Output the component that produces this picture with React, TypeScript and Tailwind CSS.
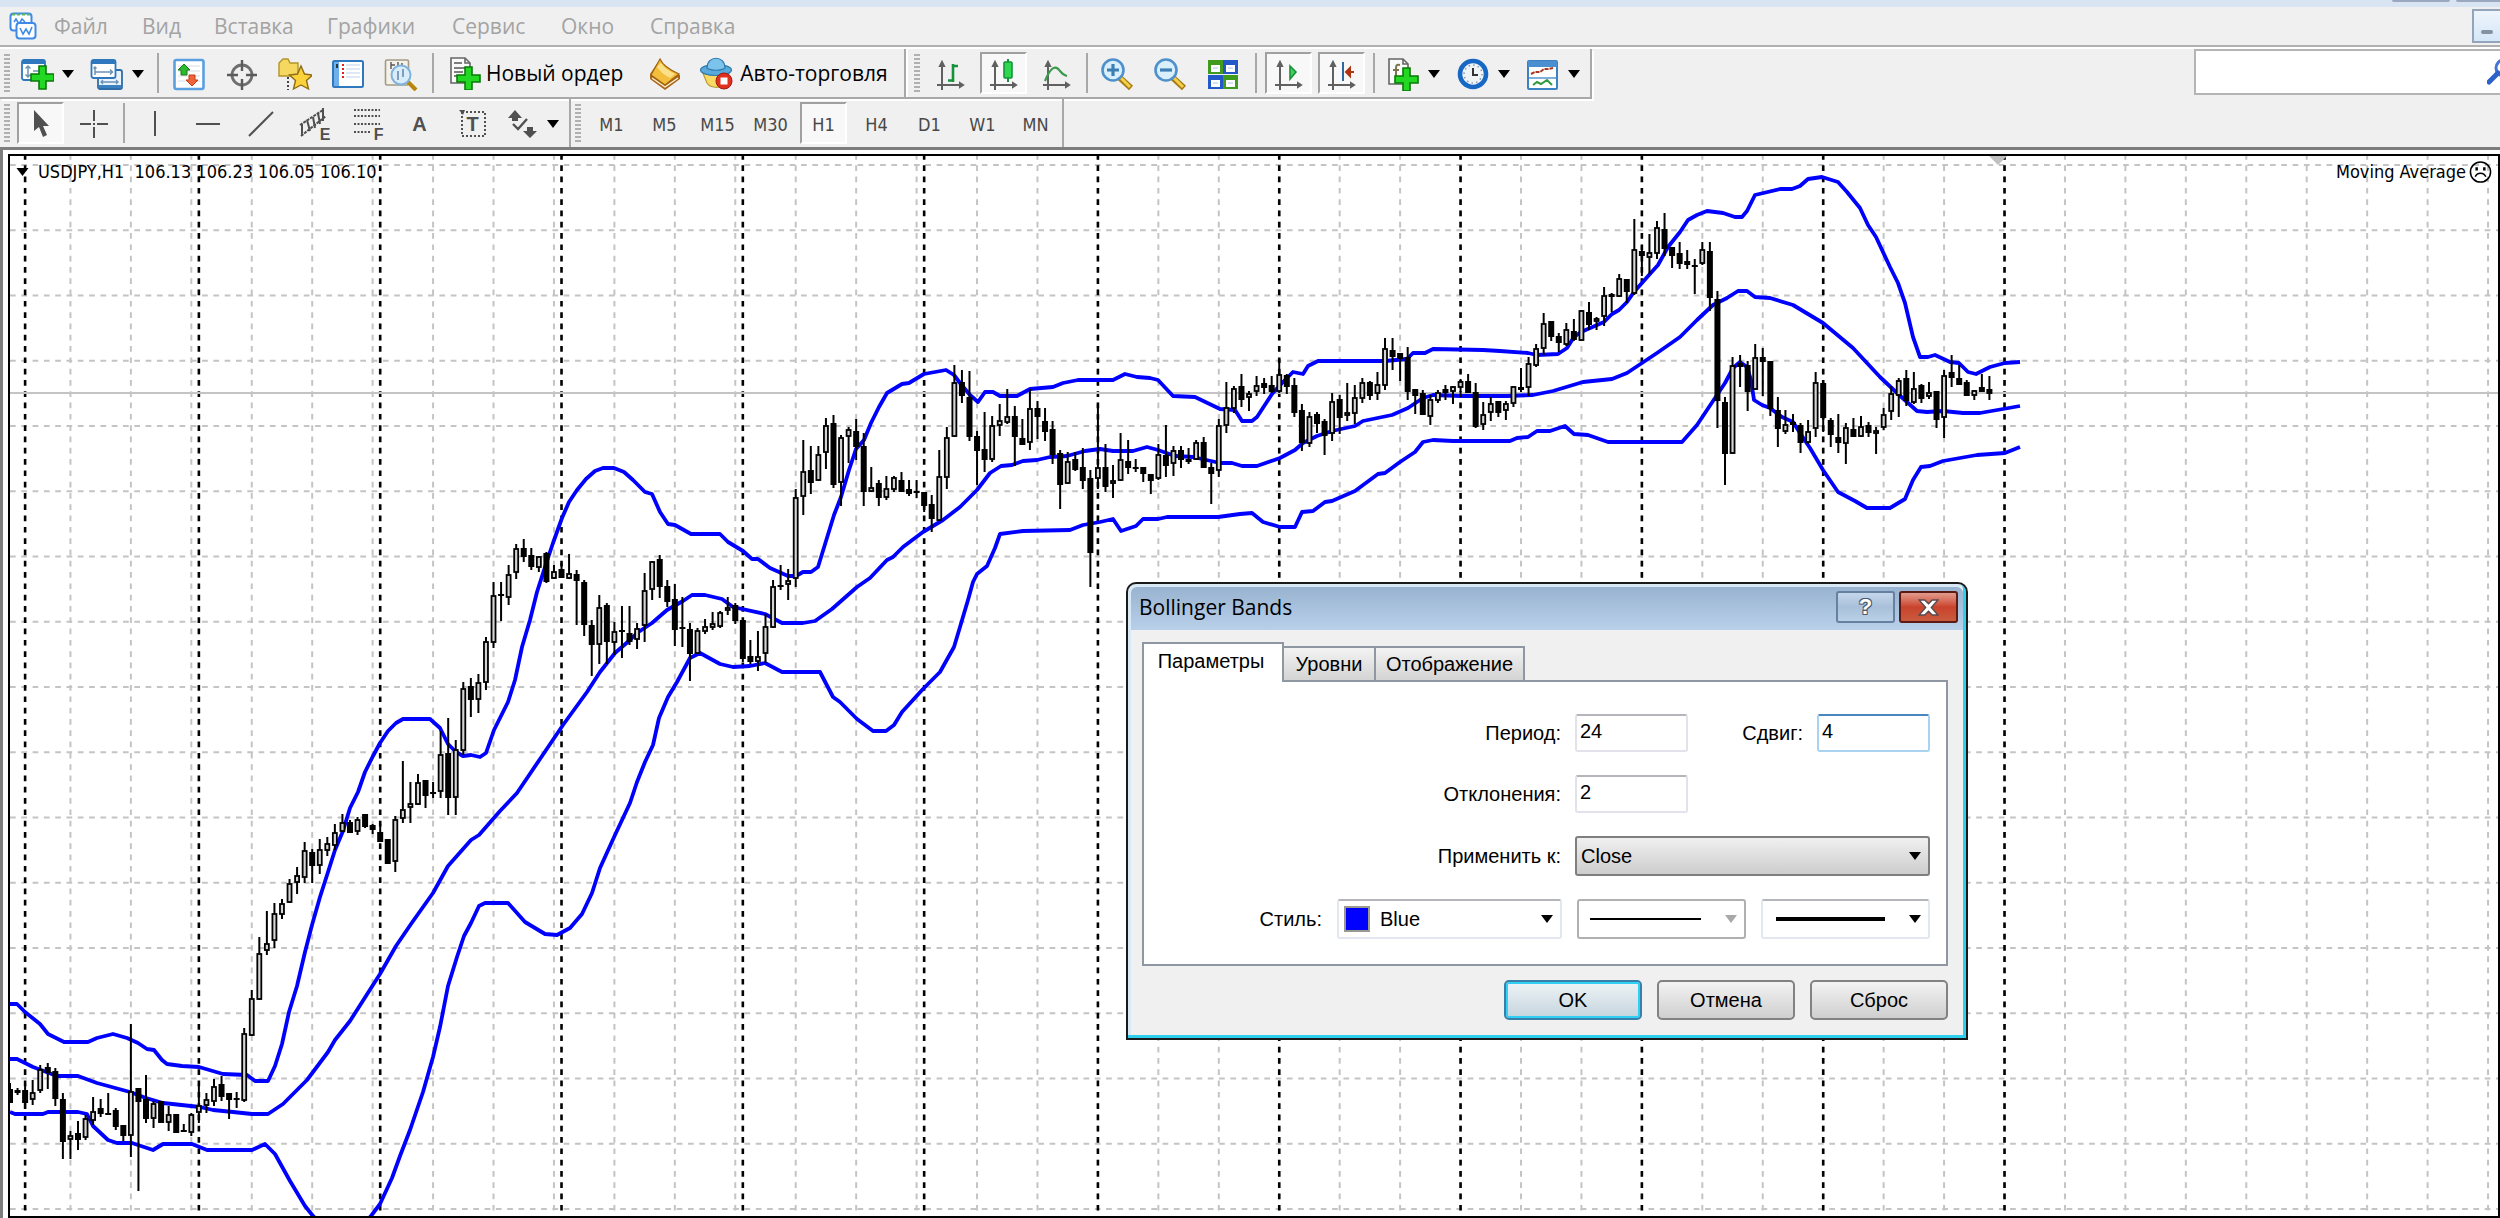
import { useState, type ReactNode } from 'react';
import { clsx } from 'clsx';

// [high, body top, body bottom, low, rising]
type Bar = [number, number, number, number, 0 | 1];

const FIRST_BAR_X = 10;
const BAR_STEP = 7.555;
const LAST_PRICE_Y = 393;

const BARS: Bar[] = [
  [1083, 1089, 1103, 1103, 0], [1088, 1090, 1093, 1095, 0], [1084, 1090, 1103, 1104, 0], [1080, 1092, 1100, 1105, 1],
  [1065, 1069, 1091, 1093, 1], [1063, 1067, 1073, 1089, 0], [1068, 1071, 1099, 1106, 0], [1093, 1099, 1142, 1159, 0],
  [1131, 1135, 1140, 1159, 1], [1121, 1133, 1140, 1150, 0], [1115, 1118, 1138, 1140, 1], [1097, 1111, 1121, 1125, 1],
  [1099, 1108, 1114, 1117, 0], [1093, 1113, 1115, 1115, 0], [1108, 1110, 1127, 1130, 0], [1125, 1125, 1136, 1141, 0],
  [1024, 1091, 1136, 1157, 1], [1088, 1088, 1102, 1191, 0], [1075, 1099, 1119, 1123, 0], [1101, 1103, 1119, 1128, 1],
  [1101, 1101, 1123, 1123, 0], [1106, 1114, 1123, 1131, 1], [1114, 1114, 1133, 1133, 0], [1124, 1130, 1132, 1132, 0],
  [1113, 1114, 1133, 1136, 1], [1084, 1105, 1113, 1123, 1], [1093, 1099, 1106, 1113, 1], [1079, 1086, 1102, 1106, 1],
  [1076, 1084, 1097, 1101, 0], [1093, 1093, 1100, 1119, 0], [1092, 1098, 1099, 1108, 0], [1028, 1033, 1101, 1102, 1],
  [990, 998, 1036, 1036, 1], [937, 953, 1000, 1000, 1], [911, 943, 951, 955, 1], [903, 913, 941, 948, 1],
  [899, 903, 915, 919, 1], [879, 883, 903, 903, 1], [867, 875, 883, 894, 1], [842, 850, 878, 883, 1],
  [849, 852, 866, 883, 0], [839, 849, 866, 874, 1], [837, 843, 851, 856, 1], [824, 832, 846, 850, 1],
  [814, 822, 832, 832, 1], [820, 822, 833, 833, 0], [817, 819, 832, 835, 1], [814, 814, 827, 828, 0],
  [824, 825, 830, 834, 0], [824, 832, 842, 842, 0], [839, 839, 864, 864, 0], [816, 819, 862, 872, 1],
  [761, 809, 819, 823, 1], [782, 803, 808, 823, 1], [774, 782, 805, 805, 1], [780, 780, 796, 808, 0],
  [782, 792, 794, 798, 0], [731, 754, 792, 798, 1], [718, 753, 798, 815, 0], [740, 749, 798, 815, 1],
  [682, 688, 751, 755, 1], [678, 686, 700, 717, 0], [674, 682, 700, 713, 1], [637, 641, 683, 690, 1],
  [582, 595, 643, 648, 1], [582, 594, 596, 621, 0], [565, 574, 598, 605, 1], [544, 548, 573, 579, 1],
  [539, 548, 557, 562, 0], [548, 555, 567, 570, 0], [556, 556, 568, 572, 1], [552, 553, 582, 583, 0],
  [565, 571, 579, 579, 1], [563, 569, 578, 578, 0], [554, 573, 579, 579, 1], [570, 574, 581, 625, 0],
  [580, 582, 625, 636, 0], [620, 625, 645, 676, 0], [595, 607, 645, 664, 1], [603, 605, 642, 664, 0],
  [622, 631, 643, 655, 1], [606, 630, 632, 658, 0], [606, 633, 642, 645, 0], [623, 628, 640, 649, 1],
  [573, 590, 626, 642, 1], [561, 561, 590, 600, 1], [555, 559, 587, 598, 0], [580, 586, 602, 607, 0],
  [584, 599, 630, 646, 0], [597, 627, 628, 647, 0], [623, 629, 654, 681, 0], [628, 630, 654, 654, 1],
  [619, 626, 632, 634, 1], [612, 623, 628, 630, 1], [611, 612, 627, 628, 1], [597, 607, 611, 615, 1],
  [603, 605, 621, 624, 0], [620, 620, 659, 662, 0], [640, 656, 662, 664, 0], [631, 656, 662, 671, 1],
  [614, 626, 654, 663, 1], [580, 586, 628, 628, 1], [565, 585, 587, 590, 0], [569, 580, 585, 600, 1],
  [489, 497, 579, 587, 1], [440, 471, 497, 515, 1], [446, 470, 483, 494, 0], [446, 454, 481, 481, 1],
  [418, 425, 453, 469, 1], [415, 423, 485, 488, 0], [435, 437, 483, 506, 1], [427, 429, 437, 463, 1],
  [419, 431, 447, 460, 0], [433, 446, 492, 506, 0], [467, 487, 492, 492, 1], [480, 483, 498, 506, 0],
  [476, 488, 498, 500, 1], [476, 477, 490, 492, 1], [472, 480, 492, 492, 0], [480, 489, 494, 496, 0],
  [480, 491, 492, 498, 0], [492, 492, 506, 512, 0], [495, 504, 519, 532, 0], [450, 476, 521, 521, 1],
  [427, 437, 478, 489, 1], [365, 382, 437, 437, 1], [370, 382, 396, 403, 0], [371, 397, 437, 441, 0],
  [431, 436, 451, 485, 0], [412, 449, 460, 472, 0], [416, 425, 460, 462, 1], [404, 420, 426, 436, 1],
  [389, 416, 423, 424, 1], [406, 416, 437, 466, 0], [419, 438, 445, 445, 0], [389, 408, 443, 450, 1],
  [401, 408, 417, 439, 0], [408, 421, 432, 441, 0], [421, 429, 455, 464, 0], [450, 453, 485, 509, 0],
  [452, 461, 484, 484, 1], [452, 459, 470, 471, 0], [448, 467, 481, 489, 0], [470, 478, 553, 587, 0],
  [404, 467, 479, 489, 1], [444, 467, 487, 492, 0], [465, 480, 484, 498, 1], [433, 459, 481, 481, 1],
  [440, 461, 468, 474, 0], [459, 467, 469, 472, 0], [467, 467, 474, 482, 0], [474, 474, 481, 494, 0],
  [444, 454, 479, 480, 1], [425, 455, 466, 477, 0], [446, 450, 464, 476, 1], [446, 450, 460, 468, 0],
  [448, 459, 462, 464, 0], [440, 442, 460, 460, 1], [437, 442, 468, 468, 0], [463, 467, 474, 504, 0],
  [419, 425, 471, 477, 1], [382, 407, 426, 433, 1], [386, 388, 409, 413, 1], [374, 386, 400, 407, 0],
  [391, 393, 398, 411, 1], [376, 385, 392, 396, 1], [378, 383, 388, 394, 0], [376, 385, 392, 393, 0],
  [359, 374, 392, 393, 1], [374, 375, 387, 394, 0], [378, 385, 413, 417, 0], [404, 410, 443, 451, 0],
  [412, 416, 444, 447, 1], [412, 414, 424, 433, 0], [419, 421, 436, 455, 0], [393, 401, 434, 441, 1],
  [395, 399, 418, 434, 0], [383, 412, 416, 421, 1], [385, 397, 414, 424, 1], [378, 382, 399, 403, 1],
  [381, 382, 396, 400, 0], [372, 384, 394, 400, 1], [338, 348, 386, 390, 1], [338, 350, 357, 370, 0],
  [353, 353, 359, 381, 0], [347, 357, 392, 400, 0], [389, 389, 396, 414, 0], [390, 393, 415, 415, 0],
  [395, 399, 417, 425, 1], [390, 392, 401, 403, 1], [385, 389, 393, 400, 0], [386, 386, 392, 404, 1],
  [379, 381, 388, 397, 1], [374, 381, 393, 393, 0], [383, 392, 427, 428, 0], [402, 414, 425, 430, 1],
  [397, 403, 413, 421, 1], [401, 401, 413, 417, 0], [401, 403, 411, 420, 1], [386, 386, 404, 407, 1],
  [368, 387, 390, 392, 0], [357, 363, 388, 396, 1], [344, 348, 366, 367, 1], [313, 323, 349, 355, 1],
  [321, 321, 337, 341, 0], [333, 336, 343, 352, 0], [323, 329, 345, 346, 1], [319, 331, 340, 341, 0],
  [310, 310, 341, 341, 1], [302, 312, 325, 330, 0], [317, 318, 322, 330, 1], [287, 295, 317, 326, 1],
  [293, 294, 297, 312, 0], [274, 278, 297, 297, 1], [279, 279, 292, 303, 0], [219, 249, 294, 295, 1],
  [246, 251, 256, 276, 0], [234, 252, 258, 274, 1], [221, 227, 254, 259, 1], [213, 229, 249, 256, 0],
  [247, 247, 256, 268, 0], [242, 253, 264, 269, 0], [250, 261, 265, 269, 0], [259, 265, 266, 294, 0],
  [242, 249, 264, 265, 1], [242, 251, 298, 311, 0], [291, 299, 401, 428, 0], [397, 402, 454, 485, 0],
  [357, 365, 454, 454, 1], [355, 363, 367, 387, 0], [361, 365, 392, 411, 0], [344, 357, 390, 390, 1],
  [348, 357, 362, 396, 0], [361, 361, 409, 416, 0], [397, 410, 429, 447, 0], [410, 424, 432, 434, 1],
  [414, 422, 425, 432, 0], [423, 425, 443, 453, 0], [420, 431, 443, 444, 1], [372, 382, 429, 437, 1],
  [382, 383, 418, 432, 0], [418, 420, 435, 447, 0], [414, 437, 443, 453, 0], [423, 427, 444, 464, 1],
  [418, 429, 437, 437, 0], [416, 426, 437, 437, 1], [422, 425, 433, 437, 0], [427, 430, 434, 454, 1],
  [408, 414, 428, 430, 1], [386, 393, 412, 420, 1], [378, 380, 396, 417, 1], [370, 378, 401, 406, 0],
  [372, 388, 403, 404, 1], [384, 385, 399, 403, 0], [382, 392, 397, 399, 1], [391, 391, 420, 428, 0],
  [370, 375, 418, 438, 1], [355, 372, 378, 387, 0], [365, 378, 385, 385, 0], [380, 382, 396, 396, 0],
  [390, 390, 396, 400, 1], [374, 387, 392, 392, 0], [376, 389, 394, 400, 0],
];

const UPPER_BAND =
  '10,1004 17,1004 25,1012 40,1024 48,1034 64,1042 88,1042 97,1038 113,1034 127,1038 138,1043 147,1049 154,1050 162,1060 167,1064 182,1066 199,1067 223,1074 247,1075 255,1081 268,1081 275,1066 282,1044 289,1012 297,986 305,952 312,925 320,897 328,872 335,850 343,831 350,808 358,792 365,772 373,756 380,743 388,731 396,723 403,719 430,719 440,728 448,744 456,752 463,756 471,755 480,757 486,753 494,730 508,702 515,680 522,647 530,620 537,592 545,567 553,543 562,518 569,502 577,490 586,479 595,471 603,468 614,468 624,472 633,480 645,492 652,494 660,512 668,524 675,525 691,534 720,534 728,542 743,551 752,559 758,559 770,568 788,576 796,576 803,572 811,572 818,567 826,541 834,515 841,497 849,470 856,449 864,440 871,423 879,407 887,393 902,384 909,383 924,374 946,370 954,375 960,383 970,395 978,402 985,392 993,392 1000,396 1017,396 1030,389 1053,387 1063,383 1078,380 1113,380 1125,374 1137,377 1150,378 1158,380 1173,396 1195,397 1220,409 1235,410 1242,421 1252,421 1257,417 1272,394 1282,383 1293,372 1303,374 1308,366 1318,361 1385,361 1407,359 1413,353 1425,353 1433,349 1483,350 1500,351 1528,353 1537,355 1558,354 1567,348 1574,337 1581,332 1604,322 1612,314 1619,310 1627,302 1634,292 1649,275 1658,265 1668,247 1680,232 1688,220 1697,215 1707,211 1723,213 1735,217 1742,217 1747,211 1755,195 1780,189 1792,189 1800,186 1808,179 1822,177 1838,182 1847,192 1860,208 1868,225 1876,237 1890,267 1898,283 1905,303 1913,337 1920,357 1928,357 1935,355 1950,362 1959,363 1968,372 1976,374 1990,367 2005,363 2020,362';

const MIDDLE_BAND =
  '10,1059 17,1059 33,1067 57,1076 78,1076 97,1083 130,1092 146,1098 163,1103 200,1107 213,1110 233,1112 252,1114 268,1114 283,1104 307,1080 328,1052 335,1040 350,1021 380,974 396,946 411,924 433,893 448,866 471,840 479,835 500,811 517,793 540,759 563,725 587,692 600,672 615,653 630,640 637,633 652,623 667,610 683,601 692,595 705,595 722,599 733,607 765,614 782,623 803,623 815,621 832,609 857,587 870,578 887,560 893,557 903,547 923,532 943,520 960,507 977,490 990,473 1001,466 1012,465 1023,461 1037,460 1050,457 1067,456 1085,451 1100,449 1113,451 1133,451 1147,447 1158,450 1175,456 1193,457 1220,463 1232,463 1242,466 1257,466 1280,458 1295,450 1303,443 1317,436 1332,431 1355,426 1363,421 1392,415 1408,408 1423,398 1433,395 1461,396 1507,396 1533,395 1553,391 1583,382 1612,379 1627,373 1642,363 1657,353 1680,337 1697,320 1713,305 1727,298 1738,291 1747,291 1755,297 1770,298 1793,305 1823,323 1853,348 1880,377 1897,393 1917,411 1927,412 1943,411 1963,413 1980,413 2003,409 2020,406';

const LOWER_BAND =
  '10,1112 15,1114 43,1114 48,1112 78,1112 87,1114 93,1126 108,1140 117,1143 132,1143 153,1150 163,1144 192,1144 207,1150 252,1150 265,1144 275,1154 290,1181 305,1206 313,1216 330,1232 355,1232 371,1216 380,1204 392,1178 400,1156 410,1130 423,1092 433,1057 440,1027 448,986 457,957 464,936 471,923 479,906 485,903 508,903 525,922 545,934 557,935 570,928 582,914 592,893 600,868 615,835 630,803 637,782 645,762 653,745 659,718 668,697 677,682 690,658 700,653 720,664 733,667 750,666 765,663 782,672 820,672 833,697 840,702 857,719 873,731 886,731 894,725 902,712 923,689 940,672 954,647 960,627 968,600 973,582 977,574 987,566 995,548 1000,534 1023,531 1070,530 1083,525 1100,522 1113,519 1121,531 1136,526 1143,519 1158,519 1167,517 1218,517 1240,514 1252,513 1263,522 1280,527 1295,527 1302,512 1313,511 1325,502 1332,501 1355,491 1378,474 1385,473 1400,462 1415,452 1423,442 1433,440 1453,441 1510,441 1517,438 1528,437 1537,431 1550,431 1565,426 1574,434 1588,435 1608,442 1650,442 1682,442 1697,425 1715,398 1725,383 1733,368 1740,362 1747,367 1751,380 1754,400 1762,405 1770,408 1782,417 1793,422 1800,433 1810,448 1823,470 1838,492 1855,501 1867,508 1890,508 1905,499 1913,480 1921,467 1930,466 1943,461 1977,455 2005,453 2020,447';

// bar indexes where a trading day starts
const DAY_STARTS = [2, 25, 49, 73, 97, 121, 144, 168, 192, 216, 240, 264];

const MENU = [
  { label: 'Файл', width: 'w-[88px]' },
  { label: 'Вид', width: 'w-[72px]' },
  { label: 'Вставка', width: 'w-[113px]' },
  { label: 'Графики', width: 'w-[125px]' },
  { label: 'Сервис', width: 'w-[109px]' },
  { label: 'Окно', width: 'w-[89px]' },
  { label: 'Справка', width: 'w-[89px]' },
];

const TIMEFRAMES = ['M1', 'M5', 'M15', 'M30', 'H1', 'H4', 'D1', 'W1', 'MN'];

function barX(index: number) {
  return FIRST_BAR_X + index * BAR_STEP;
}

/* ---------- icons ---------- */

function Icon({ children }: { children: ReactNode }) {
  return (
    <svg viewBox="0 0 34 34" className="h-[34px] w-[34px] shrink-0" fill="none" aria-hidden="true">
      {children}
    </svg>
  );
}

function Caret({ className = 'text-black' }: { className?: string }) {
  return (
    <svg viewBox="0 0 12 8" className={clsx('h-[8px] w-[12px] shrink-0', className)} aria-hidden="true">
      <path d="M0 0h12L6 8z" fill="currentColor" />
    </svg>
  );
}

function Plus() {
  return <path d="M18 10h7v8h8v7h-8v8h-7v-8h-8v-7h8z" fill="#22d822" stroke="#0a7a0a" strokeWidth="1.6" />;
}

function AppIcon() {
  return (
    <svg viewBox="0 0 28 28" className="h-[28px] w-[28px] shrink-0" fill="none" aria-hidden="true">
      <rect x="1.5" y="1.5" width="21" height="17" rx="3" fill="#fff" stroke="#3f8ae6" strokeWidth="2" />
      <path d="M3 2.5h18" stroke="#5cb85c" strokeWidth="2" strokeDasharray="3 2" />
      <path d="M5 10l2-3 3 5 3-5 3 3" stroke="#3f8ae6" strokeWidth="1.6" />
      <rect x="7.5" y="11" width="19" height="15.5" rx="3" fill="#fff" stroke="#3f8ae6" strokeWidth="2" />
      <path d="M11 16l3 6 3-5 3 5 3-7" stroke="#3f8ae6" strokeWidth="1.6" />
    </svg>
  );
}

function NewChartIcon() {
  return (
    <Icon>
      <rect x="2" y="3" width="23" height="20" rx="2" fill="#fff" stroke="#2f78bd" strokeWidth="1.8" />
      <path d="M2 3h23v4H2z" fill="#2f78bd" />
      <path d="M8 9v11M5.5 11.5L8 9l2.5 2.5M5.5 17.5L8 20l2.5-2.5M13 14h6" stroke="#6d93b5" strokeWidth="1.5" />
      <g transform="translate(1 -1)">
        <Plus />
      </g>
    </Icon>
  );
}

function ProfilesIcon() {
  return (
    <Icon>
      <rect x="8" y="13" width="24" height="19" rx="2" fill="#e9f3fc" stroke="#2f6ca8" strokeWidth="1.8" />
      <path d="M9 28h22v3H9z" fill="#3b7fc0" />
      <path d="M11 25h17M13 23l-2 2 2 2M26 23l2 2-2 2" stroke="#6d93b5" strokeWidth="1.4" />
      <rect x="1.5" y="3" width="24" height="18" rx="2" fill="#fff" stroke="#2f78bd" strokeWidth="1.8" />
      <path d="M1.5 3h24v4h-24z" fill="#2f78bd" />
      <path d="M5 10v8M5 15h17M20 12.5l2.5 2.5-2.5 2.5M3.5 11.5L5 10l1.5 1.5" stroke="#6d93b5" strokeWidth="1.5" />
    </Icon>
  );
}

function MarketWatchIcon() {
  return (
    <Icon>
      <rect x="2.500" y="3" width="29" height="29" rx="2" fill="#fff" stroke="#5a9fe0" strokeWidth="2.6" />
      <path d="M6 9h22M6 14h22M6 19h22M6 24h22" stroke="#d5dde5" strokeWidth="1" />
      <path d="M12 7l6 6h-3v5H9v-5H6z" fill="#2eb82e" stroke="#167a16" />
      <path d="M20 29l-6-6h3v-5h6v5h3z" fill="#f0643c" stroke="#c43c14" />
    </Icon>
  );
}

function NavigatorIcon() {
  return (
    <Icon>
      <circle cx="17" cy="18" r="10" stroke="#6e6e6e" strokeWidth="2.8" />
      <path d="M17 3v11M17 22v11M2 18h11M21 18h11" stroke="#5a5a5a" strokeWidth="2.4" />
    </Icon>
  );
}

function FavoritesIcon() {
  return (
    <Icon>
      <path d="M10 20v13" stroke="#444" strokeWidth="2" strokeDasharray="2 2" />
      <path d="M1 6l4-4h5l2 4h8v13H1z" fill="#f6d860" stroke="#b3942a" strokeWidth="1.4" />
      <path d="M23 9l3.5 8 8 1-6 5.500 2 8.500-7.500-4-7.500 4 2-8.500-6-5.500 8-1z" fill="#fbd23c" stroke="#8f6d10" strokeWidth="1.4" />
    </Icon>
  );
}

function DataWindowIcon() {
  return (
    <Icon>
      <rect x="2" y="4" width="30" height="26" rx="1.5" fill="#fff" stroke="#2f78bd" strokeWidth="2" />
      <path d="M3 5h5v24H3z" fill="#6fb0ea" />
      <path d="M6 7v4" stroke="#111" strokeWidth="1.5" />
      <path d="M12 7v2M12 11v2M12 15v2M12 19v2" stroke="#e02020" strokeWidth="2" />
      <path d="M15 8h14M15 12h14M15 16h14M15 20h14" stroke="#bcd2ea" strokeWidth="1" />
    </Icon>
  );
}

function TesterIcon() {
  return (
    <Icon>
      <rect x="1.5" y="3" width="23" height="25" rx="1.5" fill="#f4f1ea" stroke="#a49a84" strokeWidth="1.6" />
      <path d="M7 5v7M7 8h4M14 5v7M14 9h4M18 6v5" stroke="#555" strokeWidth="1.4" />
      <path d="M24 25l8 8" stroke="#b8860b" strokeWidth="4" />
      <circle cx="17" cy="18" r="9.5" fill="#d8ecfa" stroke="#7fb2dc" strokeWidth="2" />
      <path d="M14 14v9M19 12v8" stroke="#7f9fba" strokeWidth="2" />
    </Icon>
  );
}

function PageWithPlusIcon({ indicator }: { indicator?: boolean }) {
  return (
    <Icon>
      <path d="M3 2h14l5 5v20H3z" fill="#fafafa" stroke="#666" strokeWidth="1.6" />
      <path d="M17 2v5h5" stroke="#666" strokeWidth="1.6" />
      {indicator ? (
        <path d="M14 8c-4-1-4 1-4 4v9M7 13h6" stroke="#7b7350" strokeWidth="2" />
      ) : (
        <path d="M6 7h8M6 12h12M6 16h9M6 20h6" stroke="#555" strokeWidth="1.6" />
      )}
      <g transform="translate(-1 1)">
        <Plus />
      </g>
    </Icon>
  );
}

function MetaEditorIcon() {
  return (
    <Icon>
      <path d="M12 2c3 7 10 11 20 16v4L17 33 2 22v-5z" fill="#a8661a" />
      <path d="M12 2c3 7 10 11 19 15L17 28 3 18z" fill="#f2be3c" stroke="#a0620f" strokeWidth="1.2" />
      <path d="M13 6c3 5 8 8 14 11l-5 4C16 18 12 14 9 10z" fill="#fbe08a" />
      <path d="M4 21l13 9 13-9" stroke="#fdf2cf" strokeWidth="1.4" />
    </Icon>
  );
}

function AutoTradeIcon() {
  return (
    <Icon>
      <path d="M3 15l5 12c3 5 13 6 17 1l6-13z" fill="#f7d964" stroke="#b99a2c" strokeWidth="1.2" />
      <ellipse cx="17" cy="14" rx="15.500" ry="5.500" fill="#58a9dc" stroke="#2f79ad" strokeWidth="1.2" />
      <path d="M8 12C8-1 26-1 26 12c-4 3-14 3-18 0z" fill="#7cc3ec" stroke="#2f79ad" strokeWidth="1.2" />
      <circle cx="25" cy="25" r="8" fill="#e0301e" stroke="#a01a10" />
      <rect x="21.500" y="21.500" width="7" height="7" fill="#fff" />
    </Icon>
  );
}

function Axes() {
  return <path d="M9 5v28M4 28h26M7 9l2-4 2 4zM27 26l3 2-3 2z" stroke="#606060" strokeWidth="2" fill="#606060" />;
}

function BarChartIcon() {
  return (
    <Icon>
      <Axes />
      <path d="M20 7v18M20 9h5M15 23.5h5" stroke="#16933a" strokeWidth="2.6" />
    </Icon>
  );
}

function CandleChartIcon() {
  return (
    <Icon>
      <Axes />
      <path d="M22 2v23" stroke="#16933a" strokeWidth="2" />
      <rect x="18" y="5" width="8" height="16" rx="1" fill="#2fd64f" stroke="#16933a" strokeWidth="1.6" />
    </Icon>
  );
}

function LineChartIcon() {
  return (
    <Icon>
      <Axes />
      <path d="M6 24c6-15 11-16 15-10 3 4 4 4 7 5" stroke="#3a9a4a" strokeWidth="2.2" />
    </Icon>
  );
}

function ZoomIcon({ out }: { out?: boolean }) {
  return (
    <Icon>
      <path d="M19 20l12 11" stroke="#a67c12" strokeWidth="6" />
      <path d="M20 20l10 10" stroke="#f3cf4a" strokeWidth="3" />
      <circle cx="13" cy="13" r="10.5" fill="#d9effc" stroke="#4f90cc" strokeWidth="2.6" />
      <path d={out ? 'M7 13h12' : 'M7 13h12M13 7v12'} stroke="#3c7fb5" strokeWidth="3.2" />
    </Icon>
  );
}

function TilesIcon() {
  return (
    <Icon>
      <path d="M2 3h15v14H2zM17 18h15v14H17z" fill="#3f9b1c" />
      <path d="M17 3h15v14H17zM2 18h15v14H2z" fill="#2457c8" />
      <path d="M5 8h9v7H5zM20 8h9v7h-9zM5 23h9v7H5zM20 23h9v7h-9z" fill="#fff" />
      <path d="M7 11h5M22 11h5M7 26h5M22 26h5" stroke="#a9c4e6" />
    </Icon>
  );
}

function AutoScrollIcon() {
  return (
    <Icon>
      <Axes />
      <path d="M19 9l6 6-6 7z" fill="#3fd25c" stroke="#16933a" strokeWidth="1.6" />
    </Icon>
  );
}

function ChartShiftIcon() {
  return (
    <Icon>
      <Axes />
      <path d="M19 5v19" stroke="#2b6aa0" strokeWidth="2" />
      <path d="M22 15h8M26 11l-4 4 4 4z" fill="#d8431c" stroke="#b0330f" strokeWidth="2" />
    </Icon>
  );
}

function ClockIcon() {
  return (
    <Icon>
      <circle cx="17" cy="17" r="13" fill="#eef3f8" stroke="#1668c4" strokeWidth="4.6" />
      <circle cx="17" cy="17" r="9" stroke="#8a98a6" strokeWidth="1.5" strokeDasharray="1.5 3.2" />
      <path d="M17 11v7h5" stroke="#333" strokeWidth="2" />
    </Icon>
  );
}

function TemplateIcon() {
  return (
    <Icon>
      <rect x="2" y="4" width="29" height="28" rx="1" fill="#fff" stroke="#3b82c4" strokeWidth="2" />
      <path d="M2 4h29v6H2z" fill="#4a8fd0" />
      <path d="M3 21h27" stroke="#7fb0dc" strokeWidth="2" />
      <path d="M5 17l4-2h5l4-3h4l5-1" stroke="#a63a22" strokeWidth="2" strokeDasharray="4 1" />
      <path d="M7 28l4-3 4 2 6-4 5 5" stroke="#2f9a3f" strokeWidth="2" />
    </Icon>
  );
}

function CursorIcon() {
  return (
    <Icon>
      <path d="M10 3v21l5-4 4 10 4-2-4-9h6z" fill="#505050" />
    </Icon>
  );
}

function CrosshairIcon() {
  return (
    <Icon>
      <path d="M17 3v11M17 20v11M3 17h11M20 17h11M16 17h2" stroke="#505050" strokeWidth="2" />
    </Icon>
  );
}

function StrokeIcon({ d }: { d: string }) {
  return (
    <Icon>
      <path d={d} stroke="#505050" strokeWidth="2" />
    </Icon>
  );
}

function ChannelIcon() {
  return (
    <span className="relative block">
      <Icon>
        <path d="M3 18L26 3M4 29L29 9" stroke="#505050" strokeWidth="2" strokeDasharray="3 1" />
        <path d="M5 17v12M10 13l3 11M16 10l2 11M21 6l2 11M26 1v13" stroke="#505050" strokeWidth="2" />
      </Icon>
      <span className="absolute right-0 bottom-0 bg-[#f0f0f0] pl-px text-base leading-3 font-bold">E</span>
    </span>
  );
}

function FibonacciIcon() {
  return (
    <span className="relative block">
      <Icon>
        <path d="M4 3h26M4 9h26M4 17h26M4 25h17" stroke="#505050" strokeWidth="2" strokeDasharray="2 1.5" />
      </Icon>
      <span className="absolute right-0 bottom-0 bg-[#f0f0f0] pl-px text-base leading-3 font-bold">F</span>
    </span>
  );
}

function LabelIcon() {
  return (
    <span className="relative flex items-center justify-center">
      <Icon>
        <rect x="6" y="5" width="23" height="24" stroke="#505050" strokeWidth="2" strokeDasharray="2 2" />
        <path d="M3 3h6l-2 5z" fill="#505050" />
      </Icon>
      <span className="absolute text-xl leading-5 font-bold">T</span>
    </span>
  );
}

function ArrowsIcon() {
  return (
    <Icon>
      <path d="M10 3l7 8h-4v3H7v-3H3zM25 31l-7-7h4v-4h6v4h4z" fill="#505050" />
      <path d="M8 17l5 5 9-10" stroke="#505050" strokeWidth="2.4" />
    </Icon>
  );
}

/* ---------- toolbars ---------- */

function Grip() {
  return (
    <span
      className="mx-1 h-[38px] w-[6px] shrink-0 self-center bg-[repeating-linear-gradient(to_bottom,#b0b0b0_0_2px,#f0f0f0_2px_4px)]"
      aria-hidden="true"
    />
  );
}

function Divider({ className = 'mx-[3px]' }: { className?: string }) {
  return <span className={clsx('h-[40px] w-[2px] shrink-0 self-center bg-[#a8a8a8]', className)} aria-hidden="true" />;
}

type ToolProps = {
  label: string;
  pressed?: boolean;
  children: ReactNode;
};

function Tool({ label, pressed, children }: ToolProps) {
  return (
    <button
      type="button"
      aria-label={label}
      aria-pressed={pressed}
      className={clsx(
        'mx-[3px] flex h-[42px] w-[47px] shrink-0 items-center justify-center border-2 pt-[2px] font-["Liberation_Sans",sans-serif] text-[#505050]',
        pressed ? 'border-t-[#a0a0a0] border-r-white border-b-white border-l-[#a0a0a0] bg-[#f8f8f8]' : 'border-transparent',
      )}
    >
      {children}
    </button>
  );
}

function MenuTool({ label, children }: ToolProps) {
  return (
    <button type="button" aria-label={label} className="flex h-[42px] w-[70px] shrink-0 items-center gap-2 pt-[2px] pl-[6px]">
      {children}
      <Caret />
    </button>
  );
}

function MenuBar() {
  return (
    <nav className="flex h-[38px] shrink-0 items-center text-[21px] leading-7 text-[#a3a3a3]">
      <span className="mr-[17px] ml-[9px]">
        <AppIcon />
      </span>
      {MENU.map((item) => (
        <button key={item.label} type="button" className={clsx('shrink-0 text-left', item.width)}>
          {item.label}
        </button>
      ))}
      <button
        type="button"
        aria-label="Свернуть"
        className="ml-auto flex h-[34px] w-[28px] items-end border-2 border-r-0 border-[#93a5bb] bg-gradient-to-b from-[#eef5fc] to-[#d5e6f7] pb-[7px] pl-[7px]"
      >
        <span className="h-[4px] w-[12px] rounded-sm bg-[#8491a1]" />
      </button>
    </nav>
  );
}

function StandardToolbar() {
  return (
    <div className="flex h-[50px] items-center border-r-2 border-b-2 border-[#a8a8a8] shadow-[2px_2px_0_#fff]">
      <Grip />
      <MenuTool label="Новый график">
        <NewChartIcon />
      </MenuTool>
      <MenuTool label="Профили">
        <ProfilesIcon />
      </MenuTool>
      <Divider />
      <Tool label="Обзор рынка">
        <MarketWatchIcon />
      </Tool>
      <Tool label="Навигатор">
        <NavigatorIcon />
      </Tool>
      <Tool label="Избранное">
        <FavoritesIcon />
      </Tool>
      <Tool label="Окно данных">
        <DataWindowIcon />
      </Tool>
      <Tool label="Тестер стратегий">
        <TesterIcon />
      </Tool>
      <Divider className="mx-[5px]" />
      <button type="button" className="mr-[15px] flex h-[42px] shrink-0 items-center gap-1 pl-[9px] text-[21px] leading-7 whitespace-nowrap">
        <PageWithPlusIcon />
        Новый ордер
      </button>
      <Tool label="MetaEditor">
        <MetaEditorIcon />
      </Tool>
      <button type="button" className="mr-4 flex h-[42px] shrink-0 items-center gap-[7px] pl-2 text-[21px] leading-7 whitespace-nowrap">
        <AutoTradeIcon />
        Авто-торговля
      </button>
      <span className="mr-[2px] h-full w-[4px] border-r-2 border-l-2 border-l-[#a8a8a8] border-r-white" />
      <Grip />
      <Tool label="Бары">
        <BarChartIcon />
      </Tool>
      <Tool label="Японские свечи" pressed>
        <CandleChartIcon />
      </Tool>
      <Tool label="Линия">
        <LineChartIcon />
      </Tool>
      <Divider />
      <Tool label="Увеличить">
        <ZoomIcon />
      </Tool>
      <Tool label="Уменьшить">
        <ZoomIcon out />
      </Tool>
      <Tool label="Выстроить окна">
        <TilesIcon />
      </Tool>
      <Divider className="mx-[5px]" />
      <Tool label="Автопрокрутка" pressed>
        <AutoScrollIcon />
      </Tool>
      <Tool label="Сдвиг графика" pressed>
        <ChartShiftIcon />
      </Tool>
      <Divider className="mx-[5px]" />
      <MenuTool label="Индикаторы">
        <PageWithPlusIcon indicator />
      </MenuTool>
      <MenuTool label="Периоды">
        <ClockIcon />
      </MenuTool>
      <MenuTool label="Шаблоны">
        <TemplateIcon />
      </MenuTool>
    </div>
  );
}

function DrawingToolbar() {
  return (
    <div className="flex h-[48px] items-center border-r-2 border-[#a8a8a8]">
      <Grip />
      <Tool label="Курсор" pressed>
        <CursorIcon />
      </Tool>
      <Tool label="Перекрестие">
        <CrosshairIcon />
      </Tool>
      <Divider />
      <Tool label="Вертикальная линия">
        <StrokeIcon d="M17 4v25" />
      </Tool>
      <Tool label="Горизонтальная линия">
        <StrokeIcon d="M5 17h24" />
      </Tool>
      <Tool label="Трендовая линия">
        <StrokeIcon d="M5 29L29 5" />
      </Tool>
      <Tool label="Равноудаленный канал">
        <ChannelIcon />
      </Tool>
      <Tool label="Линии Фибоначчи">
        <FibonacciIcon />
      </Tool>
      <Tool label="Текст">
        <span className="text-xl font-bold">A</span>
      </Tool>
      <Tool label="Текстовая метка">
        <LabelIcon />
      </Tool>
      <MenuTool label="Стрелки">
        <ArrowsIcon />
      </MenuTool>
    </div>
  );
}

function PeriodToolbar() {
  const [period, setPeriod] = useState('H1');

  return (
    <div className="flex h-[48px] items-center border-r-2 border-[#a8a8a8]">
      <Grip />
      {TIMEFRAMES.map((name) => (
        <button
          key={name}
          type="button"
          aria-pressed={name === period}
          onClick={() => setPeriod(name)}
          className={clsx(
            'mx-[3px] h-[42px] w-[47px] shrink-0 border-2 pt-1 font-["DejaVu_Sans_Condensed","DejaVu_Sans",sans-serif] text-[18px] leading-6 text-[#484848]',
            name === period
              ? 'border-t-[#a0a0a0] border-r-white border-b-white border-l-[#a0a0a0] bg-[#f8f8f8]'
              : 'border-transparent',
          )}
        >
          {name}
        </button>
      ))}
    </div>
  );
}

function SearchBox() {
  return (
    <label className="flex h-[46px] w-[306px] items-center border-2 border-r-0 border-[#b4b4b4] bg-white">
      <input type="search" aria-label="Поиск" className="h-full min-w-0 flex-1 px-2 text-[20px] outline-none" />
      <svg viewBox="0 0 13 28" className="h-[28px] w-[13px]" fill="none" aria-hidden="true">
        <circle cx="17" cy="10" r="8" stroke="#3f74d8" strokeWidth="3" />
        <path d="M2 24l9-9" stroke="#2f62c8" strokeWidth="5" strokeLinecap="round" />
      </svg>
    </label>
  );
}

/* ---------- chart ---------- */

function Candle({ bar, x }: { bar: Bar; x: number }) {
  const [high, top, bottom, low, rising] = bar;
  const height = Math.max(bottom - top, 2);

  return (
    <g>
      <path d={`M${x} ${high}V${low}`} stroke="#000" strokeWidth="2" />
      {rising ? (
        <rect x={x - 2} y={top + 1} width="4" height={Math.max(height - 2, 2)} fill="#d4d4d4" stroke="#000" strokeWidth="1.8" />
      ) : (
        <rect x={x - 3} y={top} width="6" height={height} fill="#000" />
      )}
    </g>
  );
}

function PriceChart() {
  const rows = Array.from({ length: 17 }, (_, i) => 165 + i * 65.25);
  const columns = Array.from({ length: 41 }, (_, i) => barX((i + 1) * 8));

  return (
    <svg className="block h-full w-full" fill="none" role="img" aria-label="USDJPY, H1">
      <g transform="translate(-10 -156)">
        <g stroke="#c4c4c4" strokeWidth="2" strokeDasharray="5.7 5.6">
          {rows.map((y) => (
            <path key={y} d={`M10 ${y}H2500`} />
          ))}
          {columns.map((x) => (
            <path key={x} d={`M${x} 154V1218`} />
          ))}
        </g>
        <g stroke="#000" strokeWidth="2.6" strokeDasharray="5.7 5.6">
          {DAY_STARTS.map((index) => (
            <path key={index} d={`M${barX(index)} 154V1218`} />
          ))}
        </g>
        <path d={`M10 ${LAST_PRICE_Y}H2500`} stroke="#c4c4c4" strokeWidth="2" />
        <path d="M1989 156h18l-9 9z" fill="#c0c0c0" />
        <g stroke="#0000ff" strokeWidth="3.8" strokeLinejoin="round">
          <polyline points={UPPER_BAND} />
          <polyline points={MIDDLE_BAND} />
          <polyline points={LOWER_BAND} />
        </g>
        {BARS.map((bar, index) => (
          <Candle key={index} bar={bar} x={barX(index)} />
        ))}
      </g>
    </svg>
  );
}

function ChartHeader() {
  return (
    <div className='absolute inset-x-0 top-0 flex items-center justify-between pt-1 pr-[6px] pl-[6px] font-["DejaVu_Sans_Condensed","DejaVu_Sans",sans-serif] text-[18px] leading-6'>
      <div className="flex items-center gap-[9px]">
        <svg viewBox="0 0 12 8" className="h-[8px] w-[13px]" aria-hidden="true">
          <path d="M0 0h12L6 8z" />
        </svg>
        <span className="whitespace-pre">USDJPY,H1  106.13 106.23 106.05 106.10</span>
      </div>
      <div className="flex items-center gap-[3px]">
        <span>Moving Average</span>
        <svg viewBox="0 0 24 24" className="h-[24px] w-[23px]" fill="none" stroke="#000" aria-hidden="true">
          <circle cx="12" cy="12" r="10.5" strokeWidth="1.6" />
          <path d="M6.5 17c2-5 9-5 11 0" strokeWidth="1.6" />
          <path d="M8 7v3.5M16 7v3.5" strokeWidth="2.6" />
        </svg>
      </div>
    </div>
  );
}

/* ---------- indicator dialog ---------- */

const inputStyle = 'h-[38px] w-[113px] rounded-[3px] border-2 bg-white pb-1 pl-[3px] outline-none';

type DropDownProps = {
  id?: string;
  label?: string;
  options: string[];
  className: string;
  caret?: string;
  disabled?: boolean;
  blankOptions?: boolean;
  children?: ReactNode;
};

function DropDown({ id, label, options, className, caret, disabled, blankOptions, children }: DropDownProps) {
  return (
    <div className="relative flex items-center">
      <select
        id={id}
        aria-label={label}
        disabled={disabled}
        className={clsx('h-[40px] appearance-none rounded-[3px] border-2 outline-none', className)}
      >
        {options.map((option) =>
          blankOptions ? <option key={option} value={option} aria-label={option} /> : <option key={option}>{option}</option>,
        )}
      </select>
      {children}
      <span className="pointer-events-none absolute right-[9px]">
        <Caret className={caret} />
      </span>
    </div>
  );
}

function ParametersForm() {
  const [period, setPeriod] = useState('24');
  const [shift, setShift] = useState('4');
  const [deviations, setDeviations] = useState('2');

  return (
    <div className="flex flex-col items-end gap-[23px] border-2 border-[#8f97a3] bg-white px-4 pt-[32px] pb-[25px]">
      <div className="flex items-center gap-[14px]">
        <label htmlFor="period">Период:</label>
        <input id="period" value={period} onChange={(e) => setPeriod(e.target.value)} className={clsx(inputStyle, 'border-[#e2e3ea] border-t-[#b4b6bc]')} />
        <label htmlFor="shift" className="w-[101px] text-right">
          Сдвиг:
        </label>
        <input id="shift" value={shift} onChange={(e) => setShift(e.target.value)} className={clsx(inputStyle, 'border-[#a9d3f0] border-t-[#4a85bb]')} />
      </div>
      <div className="flex items-center gap-[14px] pr-[242px]">
        <label htmlFor="deviations">Отклонения:</label>
        <input id="deviations" value={deviations} onChange={(e) => setDeviations(e.target.value)} className={clsx(inputStyle, 'border-[#e2e3ea] border-t-[#b4b6bc]')} />
      </div>
      <div className="flex items-center gap-[14px]">
        <label htmlFor="apply-to">Применить к:</label>
        <DropDown
          id="apply-to"
          options={['Close', 'Open', 'High', 'Low']}
          className="w-[355px] border-[#7f7f7f] bg-gradient-to-b from-[#f0f0f0] to-[#cdcdcd] pl-[4px]"
        />
      </div>
      <div className="flex items-center gap-[15px]">
        <label htmlFor="color">Стиль:</label>
        <DropDown
          id="color"
          options={['Blue', 'Red', 'Green']}
          className="w-[225px] border-[#e2e6ee] border-t-[#b4b6bc] bg-white pl-[41px]"
        >
          <span className="pointer-events-none absolute left-[7px] h-[26px] w-[26px] border-2 border-[#9a9a90] bg-[#0000ff]" />
        </DropDown>
        <DropDown label="Тип линии" options={['Solid', 'Dash']} blankOptions disabled caret="text-[#a8a8a8]" className="w-[169px] border-[#b0b0b0] bg-white opacity-100">
          <span className="pointer-events-none absolute left-[13px] h-[2px] w-[111px] bg-black" />
        </DropDown>
        <DropDown label="Толщина" options={['2', '1', '3']} blankOptions className="w-[169px] border-[#e2e6ee] border-t-[#b4b6bc] bg-white">
          <span className="pointer-events-none absolute left-[15px] h-[4px] w-[109px] bg-black" />
        </DropDown>
      </div>
    </div>
  );
}

function BollingerDialog() {
  const tab = 'border-2 border-[#8f97a3] bg-gradient-to-b from-[#f3f3f3] to-[#d4d4d4]';
  const button = 'h-[40px] w-[138px] rounded-[5px] border-2 bg-gradient-to-b';

  return (
    <section
      role="dialog"
      aria-labelledby="dialog-title"
      className='absolute top-[426px] left-[1116px] flex w-[842px] flex-col rounded-t-[10px] border-2 border-[#1a1a1a] bg-[#f0f0f0] font-["Liberation_Sans",sans-serif] text-[20px] leading-6 text-black shadow-[inset_-3px_-3px_0_#2fd0ee,inset_3px_3px_0_#d8e8f5]'
    >
      <header className="mx-[3px] mt-[3px] flex h-[43px] items-center gap-1 rounded-t-md bg-gradient-to-b from-[#98b3d0] to-[#b9d0ea] pr-[5px] pb-[3px] pl-[8px]">
        <h2 id="dialog-title" className='mr-auto font-["Open_Sans",sans-serif] text-[21px]'>
          Bollinger Bands
        </h2>
        <button
          type="button"
          aria-label="Справка"
          className="flex h-[32px] w-[59px] items-center justify-center rounded-[3px] border-2 border-[#66809f] bg-gradient-to-b from-[#c4d6ea] via-[#a9c0da] to-[#b9d0e8] text-[22px] font-bold text-white [text-shadow:-1px_-1px_0_#4a5a72,1px_-1px_0_#4a5a72,-1px_1px_0_#4a5a72,1px_1px_0_#4a5a72]"
        >
          ?
        </button>
        <button
          type="button"
          aria-label="Закрыть"
          className="flex h-[32px] w-[59px] items-center justify-center rounded-[3px] border-2 border-[#5c1a14] bg-gradient-to-b from-[#e19a8c] via-[#c9432c] to-[#c95a3e]"
        >
          <svg viewBox="0 0 22 18" className="h-[17px] w-[21px]" aria-hidden="true">
            <path d="M1 1h6l4 4 4-4h6l-7 8 7 8h-6l-4-4-4 4H1l7-8z" fill="#fff" stroke="#5a4a50" strokeWidth="1.5" />
          </svg>
        </button>
      </header>

      <div className="pt-[12px] pr-[18px] pb-[18px] pl-[14px]">
        <div role="tablist" className="flex items-end">
          <button type="button" role="tab" aria-selected="true" className="relative z-10 -mb-[2px] h-[40px] w-[142px] border-2 border-b-0 border-[#8f97a3] bg-white pr-1 pb-1">
            Параметры
          </button>
          <button type="button" role="tab" aria-selected="false" className={clsx(tab, 'h-[34px] w-[92px] border-b-0 border-l-0')}>
            Уровни
          </button>
          <button type="button" role="tab" aria-selected="false" className={clsx(tab, 'h-[34px] w-[149px] border-b-0 border-l-0')}>
            Отображение
          </button>
        </div>
        <ParametersForm />
        <div className="mt-[14px] flex justify-end gap-[15px]">
          <button type="button" className={clsx(button, 'border-[#3a7fa8] from-[#eef4f7] to-[#c5d4dd] shadow-[inset_0_0_0_2px_#30d0f5]')}>
            OK
          </button>
          <button type="button" className={clsx(button, 'border-[#828282] from-[#f3f3f3] to-[#cfcfcf]')}>
            Отмена
          </button>
          <button type="button" className={clsx(button, 'border-[#828282] from-[#f3f3f3] to-[#cfcfcf]')}>
            Сброс
          </button>
        </div>
      </div>
    </section>
  );
}

export default function App() {
  return (
    <div className='flex h-screen flex-col overflow-hidden bg-[#f0f0f0] font-["Open_Sans","Noto_Sans",sans-serif] text-black'>
      <div className="flex h-[7px] shrink-0 items-start justify-end gap-[6px] bg-[#d8e4f1]">
        <span className="h-[2px] w-[58px] rounded-b-md bg-[#9aa8c0]" />
        <span className="h-[2px] w-[44px] rounded-bl-md bg-[#9aa8c0]" />
      </div>
      <MenuBar />
      <div className="flex shrink-0 justify-between border-t-2 border-[#b0b0b0] shadow-[inset_0_2px_0_#fff]">
        <div className="flex items-start pt-[2px]">
          <StandardToolbar />
        </div>
        <div className="pt-[2px]">
          <SearchBox />
        </div>
      </div>
      <div className="flex shrink-0">
        <DrawingToolbar />
        <PeriodToolbar />
      </div>
      <main className="flex min-h-0 flex-1 border-t-[3px] border-l-[3px] border-[#7d7d7d] bg-white pt-[4px] pl-[5px]">
        <div className="relative min-w-0 flex-1 overflow-hidden border-2 border-black">
          <PriceChart />
          <ChartHeader />
          <BollingerDialog />
        </div>
      </main>
    </div>
  );
}
